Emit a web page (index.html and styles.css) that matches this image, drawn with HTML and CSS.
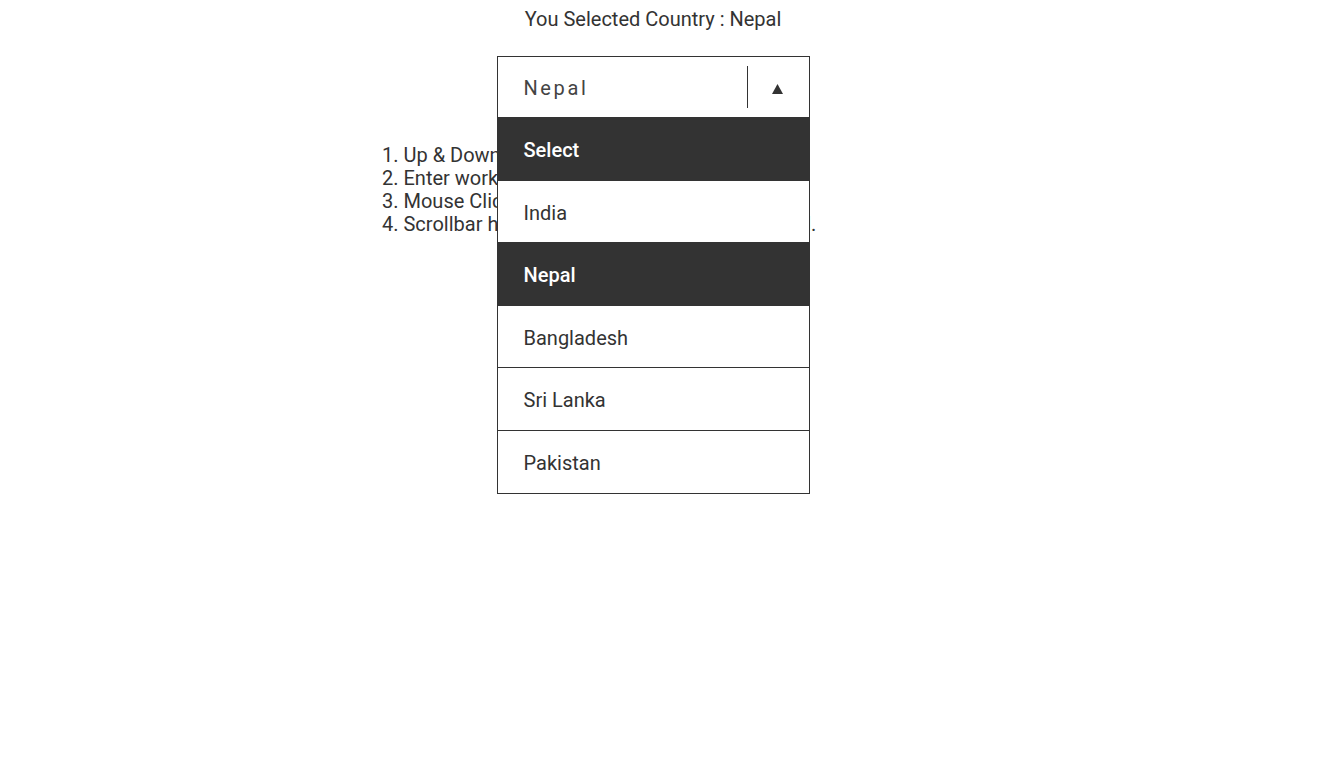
FILE: index.html
```html
<!DOCTYPE html>
<html lang="en">
<head>
  <meta charset="UTF-8">
  <meta name="viewport" content="width=device-width, initial-scale=1.0">
  <title>Custom Select</title>
  <link rel="stylesheet" href="styles.css">
</head>
<body>
  <div class="page">
    <p class="result">You Selected Country : <span id="selected">Nepal</span></p>

    <div class="dropdown open">
      <div class="dropdown-toggle">
        <span class="dropdown-value">Nepal</span>
        <span class="dropdown-arrow">
          <svg width="11" height="10" viewBox="0 0 11 10"><polygon points="5.5,0 11,10 0,10" fill="#333"/></svg>
        </span>
      </div>
      <ul class="dropdown-list">
        <li class="highlight">Select</li>
        <li>India</li>
        <li class="highlight">Nepal</li>
        <li>Bangladesh</li>
        <li>Sri Lanka</li>
        <li>Pakistan</li>
      </ul>
    </div>

    <ol class="notes">
      <li>Up &amp; Down keys to move.</li>
      <li>Enter works to select.</li>
      <li>Mouse Click to select.</li>
      <li>Scrollbar hides automatically if it's not needed.</li>
    </ol>
  </div>
</body>
</html>
```

FILE: styles.css
```css
html, body {
    min-height: 100vh;
}

body {
    margin: 0;
    font-family: Roboto, "Liberation Sans", sans-serif;
    color: #333;
    background-color: #fff;
}

.page {
    width: 1306px;
    min-height: 100vh;
    padding-top: 8px;
}

.result {
    margin: 0;
    text-align: center;
    font-size: 20px;
    line-height: 23px;
}

.dropdown {
    position: relative;
    width: 313px;
    margin: 25px auto 0;
    font-size: 20px;
}

.dropdown-toggle {
    display: flex;
    align-items: center;
    height: 62px;
    box-sizing: border-box;
    border: 1px solid #333;
    padding-left: 26px;
    cursor: pointer;
}

.dropdown-value {
    flex: 1;
    padding-top: 2px;
    letter-spacing: 2.6px;
    color: #444;
}

.dropdown-arrow {
    display: flex;
    align-items: center;
    justify-content: center;
    width: 62px;
    height: 42px;
    box-sizing: border-box;
    border-left: 1px solid #333;
    padding: 3px 2px 0 0;
}

.dropdown-list {
    position: absolute;
    top: 100%;
    left: 0;
    right: 0;
    margin: 0;
    padding: 0;
    list-style: none;
    background-color: #fff;
    border: 1px solid #333;
    border-top: 0;
}

.dropdown-list li {
    height: 62.5px;
    box-sizing: border-box;
    padding: 21px 26px 0;
    line-height: 23px;
    border-bottom: 1px solid #333;
    cursor: pointer;
}

.dropdown-list li:last-child {
    border-bottom: 0;
}

.dropdown-list li.highlight {
    background-color: #333;
    color: #fff;
    font-weight: 500;
}

.notes {
    width: 542px;
    margin: 25.5px auto 0;
    padding: 0;
    list-style-position: inside;
    font-size: 20px;
    line-height: 23px;
}
```
